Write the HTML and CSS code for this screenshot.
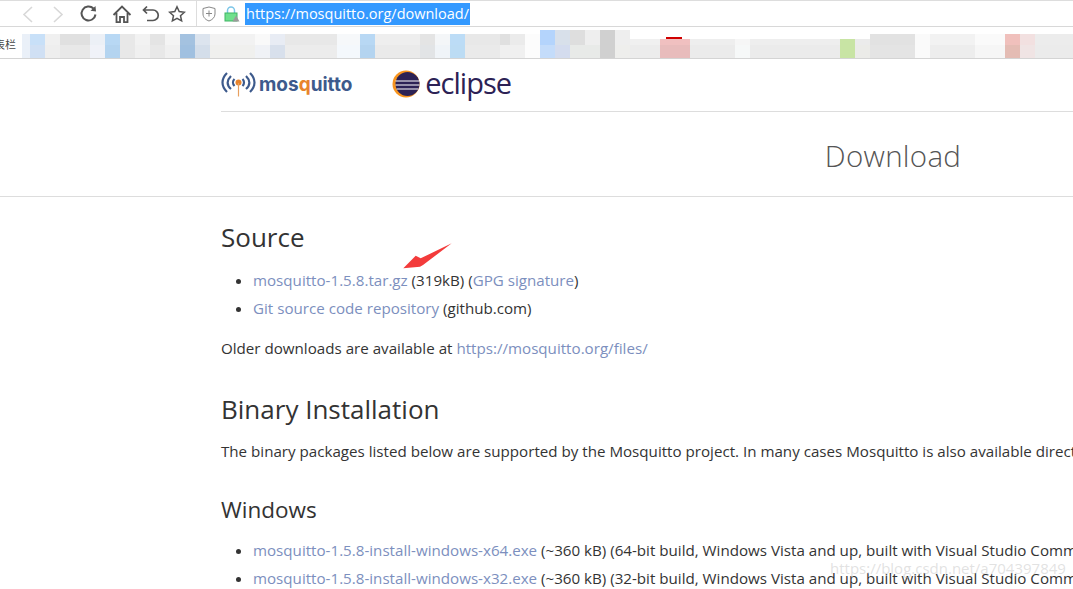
FILE: index.html
```html
<!DOCTYPE html>
<html>
<head>
    <meta charset="UTF-8">
    <title>Download | Mosquitto</title>
    <link rel="stylesheet" href="styles.css">
</head>
<body>
    <div class="toolbar">
        <svg class="nav-icon back" width="16" height="20" viewBox="0 0 16 20"><path d="M12 3 4 10.500 12 18" fill="none" stroke="#d8d8d8" stroke-width="1.600"/></svg>
        <svg class="nav-icon forward" width="16" height="20" viewBox="0 0 16 20"><path d="M4 3 12 10.500 4 18" fill="none" stroke="#d8d8d8" stroke-width="1.600"/></svg>
        <svg class="nav-icon reload" width="20" height="20" viewBox="0 0 20 20"><path d="M16.500 10.500A7 7 0 1 1 14.500 4.500" fill="none" stroke="#555" stroke-width="2"/><path d="M11.500 6.800 17 7.500 16.500 2z" fill="#555"/></svg>
        <svg class="nav-icon home" width="20" height="20" viewBox="0 0 20 20"><path d="M1.500 11 10 2.500 18.500 11M4.500 9V18.200H8V13H12V18.200H15.500V9" fill="none" stroke="#555" stroke-width="1.800"/></svg>
        <svg class="nav-icon undo" width="20" height="20" viewBox="0 0 20 20"><path d="M6 2.500 2.500 6 6 9.500M2.500 6H12A5 5 0 0 1 12 16.500H6" fill="none" stroke="#555" stroke-width="1.700"/></svg>
        <svg class="nav-icon star" width="18" height="18" viewBox="0 0 18 18"><path d="M9 1.800 11.200 6.600 16.400 7.200 12.500 10.700 13.600 15.900 9 13.300 4.400 15.900 5.500 10.700 1.600 7.200 6.800 6.600z" fill="none" stroke="#555" stroke-width="1.500"/></svg>
        <div class="address">
            <svg class="shield" width="14" height="16" viewBox="0 0 14 16"><path d="M1 2.500 7 1 13 2.500V8C13 11.500 10 14 7 15 4 14 1 11.500 1 8z" fill="none" stroke="#888"/><path d="M7 4.500V10.500M4 7.500H10" stroke="#888"/></svg>
            <svg class="lock" width="16" height="16" viewBox="0 0 16 16"><path d="M3.500 7V4.500A3.500 3.500 0 0 1 10.500 4.500V7" fill="none" stroke="#7cc6e8" stroke-width="1.500"/><rect x="1" y="7" width="12" height="8" fill="#6fe08c" stroke="#3fb565"/><path d="M12 9.500 15.500 15.500H8.500z" fill="#9a9a9a"/></svg>
            <span class="url">https://mosquitto.org/download/</span>
        </div>
    </div>

    <div class="bookmarks">
        <span class="bookmark-label">表栏</span>
        <div class="mosaic"></div>
    </div>

    <div class="page">
        <header class="logos">
            <div class="logo-mosquitto">
                <svg width="35" height="26" viewBox="0 0 35 26">
                    <g fill="none" stroke="#3d5a8c" stroke-width="2.200">
                        <path d="M6 2C0 8 0 15 6 21M10 5C5.500 9.500 5.500 14 10 18M13.500 8C11.500 10 11.500 13 13.500 15"/>
                        <path d="M29 2C35 8 35 15 29 21M25 5C29.500 9.500 29.500 14 25 18M21.500 8C23.500 10 23.500 13 21.500 15"/>
                    </g>
                    <circle cx="17.500" cy="11.500" r="3" fill="#e8842c"/>
                    <path d="M17.500 12V25.500" stroke="#e8a060" stroke-width="1.200"/>
                </svg>
                <span class="logo-mosquitto-text">mos<span class="logo-q">q</span>uitto</span>
            </div>
            <div class="logo-eclipse">
                <svg width="28" height="28" viewBox="0 0 28 28">
                    <circle cx="14" cy="14" r="13.500" fill="#f7941e"/>
                    <circle cx="15.500" cy="14" r="12" fill="#2c2255"/>
                    <path d="M3.500 11H27.500M3.500 15H27.500M4.500 19H26.500" stroke="#fff" stroke-width="1.200"/>
                </svg>
                <span class="logo-eclipse-text">eclipse</span>
            </div>
        </header>
        <h1 class="page-title">Download</h1>
    </div>

    <main class="content">
        <h2>Source</h2>
        <ul>
            <li><a href="#">mosquitto-1.5.8.tar.gz</a> (319kB) (<a href="#">GPG signature</a>)</li>
            <li><a href="#">Git source code repository</a> (github.com)</li>
        </ul>
        <p>Older downloads are available at <a href="#">https://mosquitto.org/files/</a></p>

        <h2 class="binary">Binary Installation</h2>
        <p>The binary packages listed below are supported by the Mosquitto project. In many cases Mosquitto is also available directly from official Linux/BSD distribution packages.</p>

        <h3>Windows</h3>
        <ul>
            <li><a href="#">mosquitto-1.5.8-install-windows-x64.exe</a> (~360 kB) (64-bit build, Windows Vista and up, built with Visual Studio Community 2017)</li>
            <li><a href="#">mosquitto-1.5.8-install-windows-x32.exe</a> (~360 kB) (32-bit build, Windows Vista and up, built with Visual Studio Community 2017)</li>
        </ul>
    </main>

    <svg class="arrow" width="52" height="30" viewBox="0 0 52 30"><path d="M1.300 26.300 13.700 13.700 18.700 16.300 49.700 1.300 21 23 18 24.700z" fill="#f33b3b"/></svg>
    <div class="watermark">https://blog.csdn.net/a704397849</div>
</body>
</html>
```

FILE: styles.css
```css
html, body {
    margin: 0;
    height: 589px;
    overflow: hidden;
    background: #fff;
}
body {
    position: relative;
    font-family: "Open Sans", sans-serif;
    font-size: 15.150px;
    color: #333;
}

/* browser chrome */
.toolbar {
    display: flex;
    align-items: center;
    height: 25px;
    padding-left: 20px;
    border-top: 1px solid #ddd;
    border-bottom: 1px solid #d8d8d8;
}
.nav-icon {
    flex: none;
}
.forward {
    margin-left: 14px;
}
.reload {
    margin-left: 13px;
}
.home {
    margin-left: 13px;
}
.undo {
    margin-left: 9px;
}
.star {
    margin-left: 7px;
}
.address {
    display: flex;
    align-items: center;
    align-self: stretch;
    flex: 1;
    margin-left: 10px;
    padding-left: 5px;
    border-left: 1px solid #ddd;
}
.lock {
    margin-left: 8px;
}
.url {
    margin-left: 5px;
    padding: 0 1px;
    background: #3399ff;
    color: #fff;
    font-size: 14.500px;
    line-height: 22px;
}
.bookmarks {
    display: flex;
    height: 31px;
    border-bottom: 1px solid #d4d4d4;
}
.bookmark-label {
    flex: none;
    width: 28px;
    margin-left: -6px;
    padding-top: 9px;
    font-family: "Noto Sans CJK SC", sans-serif;
    font-size: 11px;
    color: #444;
}
/* the blurred-out bookmarks: white masks trim the top edge, then two rows of tiles */
.mosaic {
    flex: 1;
    height: 28px;
    margin-top: 3px;
    background:
        linear-gradient(#d00000, #d00000) 644px 7px / 16px 2px no-repeat,
        linear-gradient(#fff, #fff) 0 0 / 518px 4px no-repeat,
        linear-gradient(#fff, #fff) 608px 0 / 240px 9px no-repeat,
        linear-gradient(#fff, #fff) 848px 0 / 203px 4px no-repeat,
        linear-gradient(90deg,
            #eaf0f8 0 8px, #c8e0f8 8px 23px, #f0f0f0 23px 38px, #e0e0e0 38px 68px, #ecf0f6 68px 83px,
            #b8d8f4 83px 98px, #e8e8e8 98px 113px, #f2f2f2 113px 128px, #e4e4e4 128px 143px, #f4f4f4 143px 158px,
            #a4c2e0 158px 173px, #dce4ee 173px 188px, #f2f2f2 188px 233px, #f9f9f9 233px 248px, #e8ecf4 248px 263px,
            #e8e8e8 263px 315px, #f6f8fa 315px 338px, #b8d8f4 338px 353px, #eee 353px 398px, #e4e4e4 398px 413px,
            #f4f6f8 413px 428px, #bcdcf6 428px 443px, #e8e8e8 443px 478px, #e0e0e0 478px 488px, #ebebeb 488px 503px,
            #fcfcfc 503px 518px, #b4d4fc 518px 533px, #d8e0ea 533px 548px, #dedede 548px 563px, #eee 563px 578px,
            #d0d0d0 578px 593px, #eee 593px 608px, #f0f0f0 608px 638px, #f0c0c0 638px 668px, #eee 668px 713px,
            #f6f6f6 713px 728px, #eee 728px 818px, #c8e4a4 818px 833px, #ebebeb 833px 848px, #e2e2e2 848px 893px,
            #fafafa 893px 908px, #f2f2f2 908px 953px, #fafafa 953px 983px, #f0c0bc 983px 998px, #f2e0e0 998px 1013px,
            #ececec 1013px 1051px) 0 0 / 100% 15px no-repeat,
        linear-gradient(90deg,
            #eaf0f8 0 8px, #d0e0f4 8px 23px, #eee 23px 38px, #e8e8e8 38px 68px, #f0f2f8 68px 83px,
            #b4d4f0 83px 98px, #e8e8e8 98px 113px, #f0f0f0 113px 128px, #e8e8e8 128px 143px, #f0f0f0 143px 158px,
            #a0c0e0 158px 173px, #d4deea 173px 188px, #f0f0ee 188px 233px, #f0f2f6 233px 248px, #d8e0ec 248px 263px,
            #ececec 263px 315px, #f4f8fc 315px 338px, #b4d4f0 338px 353px, #eaeaea 353px 398px, #e2e4e6 398px 413px,
            #f0f4f8 413px 428px, #bcdcf4 428px 443px, #eaeaea 443px 478px, #f0f0f0 478px 503px,
            #fcfcfc 503px 518px, #c4dcfa 518px 533px, #d4dcee 533px 548px, #e8eae8 548px 578px,
            #d0d0d0 578px 593px, #eeeeec 593px 608px, #ececec 608px 638px, #e8bcbc 638px 668px, #ebebeb 668px 713px,
            #f6f8f8 713px 728px, #ebebeb 728px 818px, #c8e4a4 818px 833px, #ebebe8 833px 848px,
            #e4e4e4 848px 893px, #fafafa 893px 908px, #ededed 908px 953px, #f6f6f6 953px 983px, #e4bcb4 983px 998px, #f0e4e4 998px 1013px,
            #ebebeb 1013px 1051px) 0 100% / 100% 13px no-repeat;
}

/* site header */
.page {
    border-bottom: 1px solid #ddd;
    height: 137px;
}
.logos {
    display: flex;
    align-items: center;
    box-sizing: border-box;
    gap: 40px;
    height: 53px;
    padding-bottom: 2px;
    margin-left: 221px;
    border-bottom: 1px solid #ddd;
}
.logo-mosquitto, .logo-eclipse {
    display: flex;
    align-items: center;
}
.logo-mosquitto-text {
    margin-left: 3px;
    font-family: "Inter", sans-serif;
    font-size: 19px;
    font-weight: 700;
    color: #3d5a8c;
}
.logo-q {
    color: #e8842c;
}
.logo-eclipse-text {
    margin-left: 5px;
    padding-bottom: 3px;
    font-size: 29px;
    letter-spacing: -1px;
    color: #2c2255;
}
.page-title {
    margin: 0 0 0 222px;
    width: 1342px;
    padding-top: 22px;
    text-align: center;
    font-size: 29.500px;
    font-weight: 300;
    line-height: 44px;
    color: #555;
    letter-spacing: 0.300px;
}

/* content */
.content {
    width: 1400px;
    margin-left: 221px;
    line-height: 28px;
}
h2 {
    margin: 20px 0 9px;
    font-size: 26px;
    font-weight: 400;
    line-height: 40px;
}
.binary {
    margin: 27px 0 0;
}
h3 {
    margin: 29px 0 10px;
    font-size: 22.500px;
    font-weight: 400;
    line-height: 32px;
}
ul {
    margin: 0 0 12px;
    padding-left: 32px;
}
p {
    margin: 0;
}
.binary + p {
    margin-top: 8px;
}
a {
    color: #7c8fbe;
    text-decoration: none;
}

/* overlays */
.arrow {
    position: absolute;
    left: 402px;
    top: 242px;
}
.watermark {
    position: absolute;
    left: 830px;
    top: 558px;
    font-size: 15px;
    color: rgba(190, 190, 190, 0.45);
    white-space: nowrap;
}
```
